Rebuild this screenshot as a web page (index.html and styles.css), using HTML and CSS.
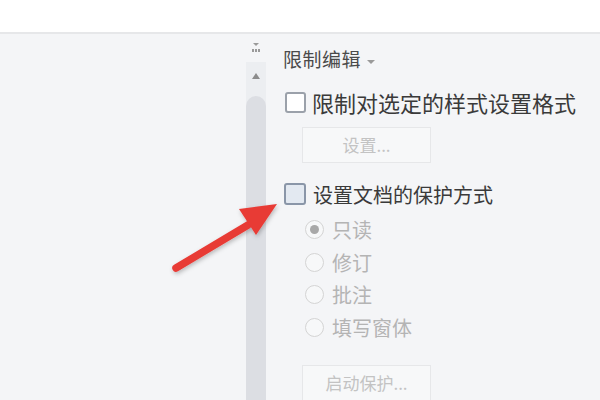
FILE: index.html
```html
<!DOCTYPE html>
<html>
<head>
    <title>限制编辑</title>
    <link rel="stylesheet" href="styles.css">
</head>

<body>
    <div class="topbar"></div>

    <div class="workspace">
        <div class="left-area">
            <!-- red pointer arrow -->
            <svg class="pointer" width="130" height="90" viewBox="0 0 130 90">
                <defs>
                    <filter id="shadow" x="-20%" y="-20%" width="140%" height="140%">
                        <feDropShadow dx="1" dy="2" stdDeviation="2" flood-color="#000" flood-opacity="0.25"/>
                    </filter>
                </defs>
                <g filter="url(#shadow)">
                    <line x1="8" y1="80" x2="80" y2="37" stroke="#e83a35" stroke-width="7.5" stroke-linecap="round"/>
                    <polygon points="109,16 71,21 88,47" fill="#e83a35"/>
                </g>
            </svg>
        </div>

        <div class="scrollbar">
            <div class="grip">
                <svg width="10" height="10" viewBox="0 0 10 10">
                    <polygon points="2,0 8,0 5,3" fill="#9a9a9a"/>
                    <rect x="1" y="6" width="2" height="3" fill="#9a9a9a"/>
                    <rect x="4" y="6" width="2" height="3" fill="#9a9a9a"/>
                    <rect x="7" y="6" width="2" height="3" fill="#9a9a9a"/>
                </svg>
            </div>
            <div class="track">
                <div class="up-arrow">
                    <svg width="8" height="6" viewBox="0 0 8 6"><polygon points="4,0 8,6 0,6" fill="#8c8c8c"/></svg>
                </div>
                <div class="thumb"></div>
            </div>
        </div>

        <div class="panel">
            <div class="panel-title">限制编辑 <span class="caret"></span></div>

            <div class="check-row first">
                <span class="checkbox"></span>
                <span class="check-label big">限制对选定的样式设置格式</span>
            </div>
            <div class="btn-row">
                <div class="btn-disabled">设置...</div>
            </div>

            <div class="check-row second">
                <span class="checkbox focused"></span>
                <span class="check-label">设置文档的保护方式</span>
            </div>

            <div class="radio-list">
                <div class="radio-row"><span class="radio checked"></span>只读</div>
                <div class="radio-row"><span class="radio"></span>修订</div>
                <div class="radio-row"><span class="radio"></span>批注</div>
                <div class="radio-row"><span class="radio"></span>填写窗体</div>
            </div>

            <div class="btn-row last">
                <div class="btn-disabled">启动保护...</div>
            </div>
        </div>
    </div>
</body>
</html>
```

FILE: styles.css
```css
html, body {
    margin: 0;
    height: 100%;
    overflow: hidden;
}

body {
    font-family: "Noto Sans CJK SC", "Noto Sans", sans-serif;
    background-color: #f4f5f7;
}

.topbar {
    height: 32px;
    background-color: #ffffff;
    border-bottom: 2px solid #e6e7e9;
}

.workspace {
    display: flex;
    height: 366px;
}

.left-area {
    width: 246px;
    position: relative;
}

.pointer {
    position: absolute;
    left: 168px;
    top: 154px;
}

/* Scroll column */
.scrollbar {
    width: 20px;
    display: flex;
    flex-direction: column;
}

.grip {
    height: 28px;
    display: flex;
    justify-content: center;
    align-items: center;
}

.track {
    flex: 1;
    background-color: #eceef1;
    display: flex;
    flex-direction: column;
}

.up-arrow {
    height: 28px;
    display: flex;
    justify-content: center;
    align-items: center;
}

.thumb {
    flex: 1;
    margin-top: 6px;
    background-color: #dcdee3;
    border-radius: 10px 10px 0 0;
}

/* Right panel */
.panel {
    flex: 1;
    padding-left: 17px;
    padding-top: 11px;
}

.panel-title {
    font-size: 19px;
    color: #4a4a4a;
    line-height: 28px;
    height: 28px;
    letter-spacing: 0.5px;
}

.caret {
    display: inline-block;
    width: 0;
    height: 0;
    margin-left: 1px;
    vertical-align: middle;
    border-left: 4px solid transparent;
    border-right: 4px solid transparent;
    border-top: 4px solid #9a9a9a;
}

.check-row {
    display: flex;
    align-items: center;
    height: 26px;
}

.check-row.first {
    margin-top: 16px;
}

.check-row.second {
    margin-top: 18px;
}

.checkbox {
    width: 17px;
    height: 17px;
    border: 2px solid #9ba1aa;
    border-radius: 3px;
    background-color: #ffffff;
    margin-left: 2px;
}

.checkbox.focused {
    width: 18px;
    height: 18px;
    border-color: #8a96a8;
    background-color: #e3e9f1;
    margin-left: 1px;
}

.check-label {
    font-size: 20px;
    color: #3a3a3a;
    margin-left: 7px;
}

.check-label.big {
    font-size: 22px;
    margin-left: 6px;
}

.btn-row {
    margin-top: 12px;
    padding-left: 19px;
}

.btn-row.last {
    margin-top: 21px;
}

.btn-disabled {
    width: 127px;
    height: 34px;
    line-height: 34px;
    border: 1px solid #e6e7e9;
    background-color: #f7f8f9;
    color: #c3c3c3;
    text-align: center;
    font-size: 17px;
}

.radio-list {
    margin-top: 6px;
    padding-left: 22px;
}

.radio-row {
    display: flex;
    align-items: center;
    height: 32.7px;
    font-size: 20px;
    color: #b4b4b4;
}

.radio {
    width: 17px;
    height: 17px;
    border: 1px solid #d4d4d4;
    border-radius: 50%;
    background-color: #f7f8f9;
    margin-right: 8px;
    position: relative;
}

.radio.checked::after {
    content: "";
    position: absolute;
    left: 4px;
    top: 4px;
    width: 9px;
    height: 9px;
    border-radius: 50%;
    background-color: #a8a8a8;
}
```
